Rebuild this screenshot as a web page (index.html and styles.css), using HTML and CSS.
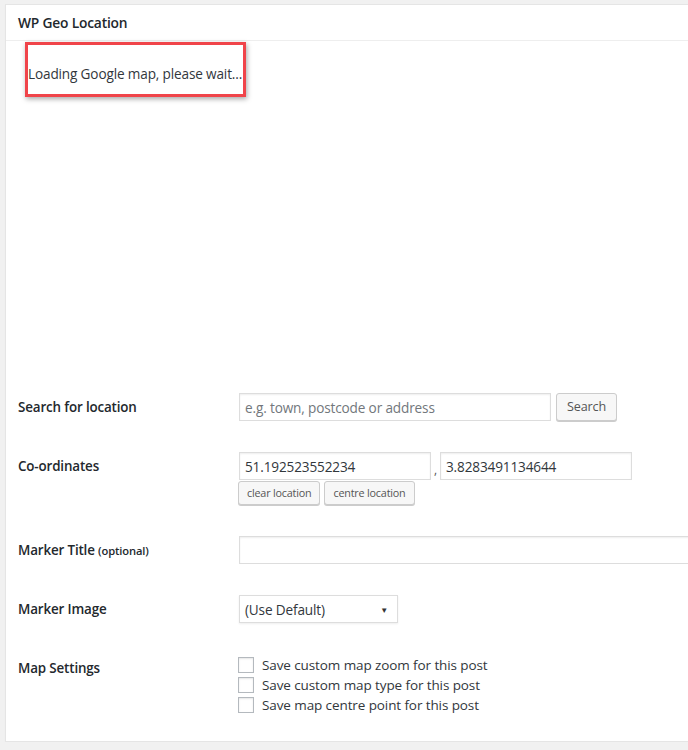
FILE: index.html
```html
<!DOCTYPE html>
<html>
<head>
<meta charset="utf-8">
<link rel="stylesheet" href="styles.css">
</head>
<body>
<div class="postbox">
  <h2 class="hndle">WP Geo Location</h2>
  <div class="inside">
    <div class="map">
      <p class="loading">Loading Google map, please wait...</p>
      <div class="highlight"></div>
    </div>
    <div class="form-row">
      <div class="label">Search for location</div>
      <div class="field inline">
        <input class="text search-input" type="text" placeholder="e.g. town, postcode or address">
        <button class="button">Search</button>
      </div>
    </div>
    <div class="form-row">
      <div class="label">Co-ordinates</div>
      <div class="field">
        <div class="inline coords">
          <input class="text coord" type="text" value="51.192523552234">
          <span class="comma">,</span>
          <input class="text coord" type="text" value="3.8283491134644">
        </div>
        <div class="inline small-buttons">
          <button class="button small">clear location</button>
          <button class="button small">centre location</button>
        </div>
      </div>
    </div>
    <div class="form-row">
      <div class="label">Marker Title <span class="opt">(optional)</span></div>
      <div class="field">
        <input class="text wide" type="text">
      </div>
    </div>
    <div class="form-row">
      <div class="label">Marker Image</div>
      <div class="field">
        <div class="select"><span>(Use Default)</span><span class="arrow">▼</span></div>
      </div>
    </div>
    <div class="form-row last">
      <div class="label settings-label">Map Settings</div>
      <div class="field checks">
        <label class="check"><span class="box"></span>Save custom map zoom for this post</label>
        <label class="check"><span class="box"></span>Save custom map type for this post</label>
        <label class="check"><span class="box"></span>Save map centre point for this post</label>
      </div>
    </div>
  </div>
</div>
</body>
</html>
```
FILE: styles.css
```css
html, body {
  margin: 0;
  padding: 0;
  background: #f1f1f1;
  overflow: hidden;
}
body {
  font-family: "Open Sans", "Noto Sans", sans-serif;
  color: #23282d;
  font-size: 13px;
}
.postbox {
  margin: 4px -40px 0 5px;
  background: #fff;
  border: 1px solid #e5e5e5;
  box-shadow: 0 1px 1px rgba(0,0,0,.04);
}
.hndle {
  margin: 0;
  font-size: 13.8px;
  font-weight: 600;
  line-height: 19px;
  padding: 8px 12px 8px 12px;
  border-bottom: 1px solid #eee;
  letter-spacing: -0.2px;
}
.inside {
  padding: 0 0 12px 12px;
}
.map {
  position: relative;
  height: 337px;
}
.loading {
  margin: 0;
  padding: 24px 0 0 10px;
  font-size: 13.6px;
  line-height: 17px;
  color: #32373c;
  letter-spacing: -0.15px;
}
.highlight {
  position: absolute;
  left: 7px;
  top: 1px;
  width: 215px;
  height: 49px;
  border: 3px solid #f0444a;
  box-shadow: 1px 2px 5px rgba(0,0,0,.35);
}
.form-row {
  display: grid;
  grid-template-columns: 221px 1fr;
  padding: 15px 0 16px;
}
.label {
  font-weight: 600;
  font-size: 13.4px;
  line-height: 28px;
  height: 28px;
  letter-spacing: -0.15px;
}
.opt {
  font-weight: 600;
  font-size: 11.2px;
}
.field {
  display: flex;
  flex-direction: column;
}
.inline {
  display: flex;
  flex-direction: row;
  align-items: center;
}
.coords {
  height: 28px;
}
.text {
  box-sizing: border-box;
  height: 28px;
  border: 1px solid #ddd;
  box-shadow: inset 0 1px 2px rgba(0,0,0,.07);
  background: #fff;
  font-family: inherit;
  font-size: 13.6px;
  color: #32373c;
  padding: 2px 5px;
  margin: 0;
  outline: none;
  letter-spacing: -0.15px;
}
.text::placeholder {
  color: #72777c;
}
.search-input {
  width: 312px;
}
.coord {
  width: 192px;
}
.comma {
  width: 9px;
  height: 28px;
  line-height: 36px;
  text-align: center;
  color: #555;
  font-size: 12px;
}
.wide {
  width: 100%;
}
.button {
  box-sizing: border-box;
  height: 28px;
  margin: 0 0 0 5px;
  padding: 0 10px;
  background: #f7f7f7;
  border: 1px solid #ccc;
  border-radius: 3px;
  box-shadow: 0 1px 0 #ccc;
  color: #555;
  font-family: inherit;
  font-size: 12.6px;
  letter-spacing: -0.15px;
  line-height: 26px;
}
.small-buttons {
  margin-top: 0;
  margin-left: -1px;
  height: 25px;
}
.button.small {
  height: 24px;
  padding: 0 8px;
  font-size: 10.8px;
  line-height: 22px;
  letter-spacing: -0.2px;
  margin: 0 4px 0 0;
}
.select {
  box-sizing: border-box;
  width: 159px;
  height: 28px;
  border: 1px solid #ddd;
  box-shadow: 0 1px 2px rgba(0,0,0,.07);
  display: flex;
  justify-content: space-between;
  align-items: center;
  padding: 0 9px 0 5px;
  font-size: 13.6px;
  color: #32373c;
  letter-spacing: -0.15px;
}
.arrow {
  font-size: 8px;
  color: #333;
}
.checks {
  padding-top: 3px;
}
.check {
  display: flex;
  align-items: center;
  height: 16px;
  margin-bottom: 4px;
  font-size: 13.5px;
  color: #32373c;
  letter-spacing: -0.1px;
}
.box {
  box-sizing: border-box;
  width: 16px;
  height: 16px;
  border: 1px solid #b4b9be;
  box-shadow: inset 0 1px 2px rgba(0,0,0,.1);
  background: #fff;
  margin: 0 8px 0 -1px;
}
.settings-label {
  line-height: 18px;
  padding-top: 5px;
}
.last {
  padding-bottom: 12px;
}
```
